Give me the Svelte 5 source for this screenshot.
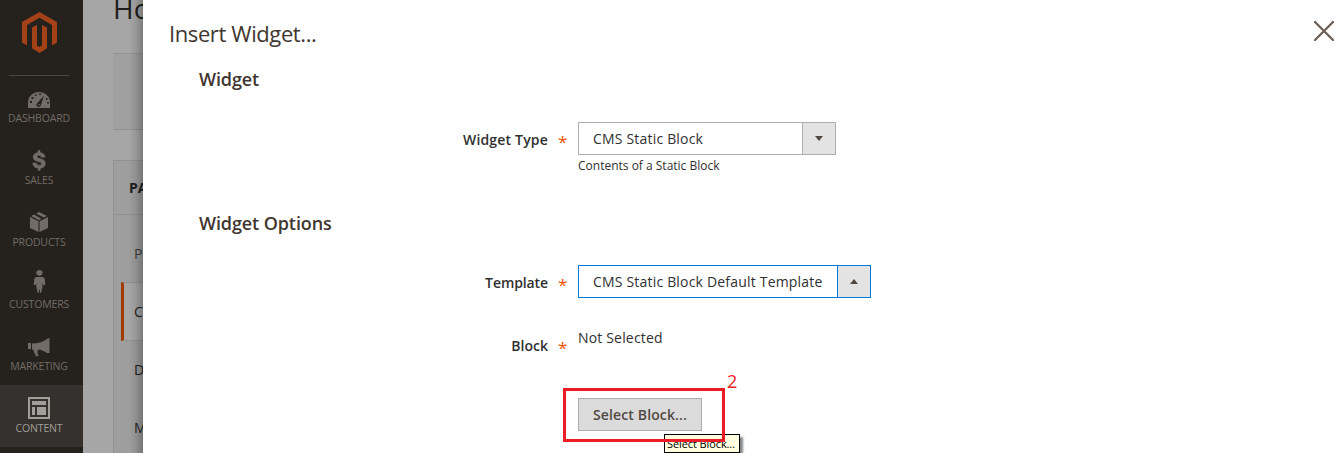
<script>
  const menu = ['Dashboard', 'Sales', 'Products', 'Customers', 'Marketing', 'Content'];
  const tabs = ['P', 'C', 'D', 'M'];
</script>

{#snippet icon(name)}
  <svg width="24" height="24" viewBox="0 0 24 24" fill="currentColor">
    {#if name === 'Dashboard'}
      <path d="M1 21v-5C1 9 6 5 12 5s11 4 11 11v5z" />
      <g fill="#25211d">
        <path d="M10 16.500l7-8-3 9c-.5 2.500-2 3-3.500 2s-1.500-2-.5-3z" />
        <path d="M3 14h2v2H3zM4.500 10h2v2h-2zM8 7.500h1.500V9H8zM12 6.500h2V8h-2zM19 11h1.500v2H19zM20 15h2v1.500h-2z" />
      </g>
      <circle cx="12" cy="17.800" r=".8" />
    {:else if name === 'Sales'}
      <path stroke="currentColor" stroke-width=".5" transform="translate(0 -.6)" d="M11 2h2v2.200c2.900.3 4.900 1.800 5.100 4.700h-3.700c-.2-1.300-.9-1.900-2.400-1.900-1.300 0-2 .4-2 1.300 0 1.100 1.500 1.400 3.500 2 3 .8 4.900 2.100 4.900 4.900 0 2.700-1.900 4.300-5.200 4.600V22h-2v-2.200c-3.300-.3-5.300-2.200-5.500-5.300h3.700c.2 1.500 1.100 2.300 2.700 2.300 1.500 0 2.400-.5 2.400-1.500 0-1.300-1.300-1.600-3.500-2.200C8.200 12.400 6.200 11.300 6.200 8.600c0-2.500 1.900-4.100 4.800-4.400z" />
    {:else if name === 'Products'}
      <path d="M3 6l8.500 4.300V21L3 17zM21 6l-8.500 4.300V21l8.500-4zM4 5l3-1.500 7.500 4.200L12 9.200zM9 2.500L12 1l8 4-3.200 1.600z" />
    {:else if name === 'Customers'}
      <path d="M9.300-.2c0-3.800 6.300-3.800 6.300 0 0 4-6.300 4-6.300 0zM10 4h5c2 0 2.600 1 2.800 2.500L18.300 12h-2.100L15.500 9.500V14l-1.500 6h-.8l-.8-4.500-.8 4.500h-.8l-1.500-6V9.500L8.700 12H6.700L7.200 6.500C7.400 5 8 4 10 4z" />
    {:else if name === 'Marketing'}
      <path d="M1 8h3v6H1zM5 8.500c6 0 11-1.500 15-4.500l1-.8h1.500V18H20c-3-2-5.500-3-8-3.500l-1.500 1 .2 3.500 1 2-2.700.2L6 14.500H5z" />
    {:else}
      <path fill-rule="evenodd" d="M1 0h22v22H1zM3 2v18h18V2zM5 4h14v4H5zM5 10h3v8H5zM10 10h9v8h-9z" />
    {/if}
  </svg>
{/snippet}

<div class="app">
  <nav>
    <div class="logo">
      <svg width="35" height="41" viewBox="0 0 35 41" fill="#a24216">
        <path d="M17.500 0L35 10v20.500L30 33.500V13L17.500 5.800 5 13v20.500L0 30.500V10z" />
        <path d="M10 15.500l5-2.500v20.500l2.500 1.500 2.500-1.500V13l5 2.500v20.700L17.500 41 10 36.200z" />
      </svg>
    </div>
    {#each menu as name}
      <div class="item {name.toLowerCase()}" class:on={name === 'Content'}>
        {@render icon(name)}
        <span>{name.toUpperCase()}</span>
      </div>
    {/each}
  </nav>

  <div class="page">
    <h1>Ho</h1>
    <div class="toolbar"></div>
    <div class="panel">
      <strong>PA</strong>
      <ul>
        {#each tabs as tab, i}
          <li class:on={i === 1} class:muted={i === 0}>{tab}</li>
        {/each}
      </ul>
    </div>
  </div>

  <main>
    <header>
      <h2>Insert Widget...</h2>
      <svg width="20" height="20" viewBox="0 0 20 20" stroke="#6b6059" stroke-width="2.300" stroke-linecap="round"><path d="M1 1l18 18M19 1L1 19" /></svg>
    </header>
    <h3>Widget</h3>
    <div class="row type">
      <label for="type">Widget Type</label><i>*</i>
      <div>
        <div class="select" id="type"><span>CMS Static Block</span><b><svg width="8" height="5"><path d="M0 0h8L4 5z" fill="#514943" /></svg></b></div>
        <small>Contents of a Static Block</small>
      </div>
    </div>
    <h3>Widget Options</h3>
    <div class="row template">
      <label for="template">Template</label><i>*</i>
      <div class="select focus" id="template"><span>CMS Static Block Default Template</span><b><svg width="8" height="5"><path d="M0 5h8L4 0z" fill="#514943" /></svg></b></div>
    </div>
    <div class="row block">
      <label for="block">Block</label><i>*</i>
      <div class="value">Not Selected</div>
    </div>
    <button id="block">Select Block...</button>
    <div class="tip">Select Block...</div>
    <div class="mark"></div>
    <div class="step">2</div>
  </main>
</div>

<style>
  :global(body) { margin: 0; overflow: hidden; }
  * { box-sizing: border-box; }
  .app { display: flex; width: 1343px; height: 453px; overflow: hidden; font: 14px/20px "Open Sans", sans-serif; color: #303030; }
  nav { width: 83px; height: 453px; overflow: hidden; background: #25211d; flex: none; }
  .logo { height: 75px; padding: 12px 0 0 22px; }
  .logo svg { display: block; }
  .item { height: 62px; display: flex; flex-direction: column; align-items: center; padding: 12px 5px 0 0; color: #716d66; }
  .item svg { display: block; flex: none; overflow: visible; }
  .item span { font-size: 10.500px; line-height: 14px; letter-spacing: -0.15px; white-space: nowrap; }
  .dashboard { background: linear-gradient(#4a4743, #4a4743) 9px 0 / 60px 1px no-repeat; }
  .on.item { background: #35312e; color: #a29e99; }
  .page { width: 60px; flex: none; padding-left: 30px; overflow: hidden; background: #a6a6a6; color: #201e1d; position: relative; }
  .page::after { content: ""; position: absolute; inset: 0 0 0 auto; width: 14px; background: linear-gradient(90deg, transparent, rgba(0, 0, 0, .08) 45%, rgba(0, 0, 0, .26)); }
  h1 { margin: 0; height: 53px; font-size: 28px; font-weight: 400; line-height: 17px; white-space: nowrap; }
  .toolbar { height: 77px; border: 1px solid #929292; border-width: 1px 0; background: rgba(0, 0, 0, .035); }
  .panel { margin-top: 30px; height: 300px; border: 1px solid #919191; border-right: 0; background: rgba(0, 0, 0, .045); }
  .panel strong { display: block; height: 54px; border-bottom: 1px solid #919191; padding-left: 15px; line-height: 54px; }
  ul { list-style: none; margin: 10px 0 0; padding: 0 0 0 7px; }
  li { height: 58px; line-height: 58px; padding-left: 13px; }
  li.muted { color: #403d3b; }
  li.on { height: 59px; margin: -1px 0 0; padding-left: 10px; border: 1px solid #919191; border-width: 1px 0; border-left: 3px solid #a33b00; background: #a6a6a6; }
  main { position: relative; width: 1200px; flex: none; background: #fff; }
  header { display: flex; justify-content: space-between; height: 65px; padding: 20px 9px 0 26px; }
  header svg { margin-top: 1px; }
  h2 { margin: 0; font-size: 22px; line-height: 26px; font-weight: 400; letter-spacing: -0.4px; color: #41362f; }
  h3 { margin: 0 0 0 56px; height: 28px; line-height: 28px; font-size: 18px; font-weight: 600; letter-spacing: -.1px; color: #41362f; }
  .row { display: flex; }
  .row label { width: 405px; text-align: right; font-weight: 600; padding-top: 8px; }
  .row i { width: 30px; padding: 10px 0 0 10px; color: #eb5202; font-style: normal; font-size: 17px; font-weight: 400; }
  .type { margin-top: 29px; height: 87px; }
  .type label { letter-spacing: .18px; }
  .select { display: flex; width: 258px; height: 33px; border: 1px solid #adadad; line-height: 31px; letter-spacing: .19px; }
  .select span { flex: 1; padding-left: 14px; white-space: nowrap; }
  .select b { width: 33px; background: #e3e3e3; border-left: 1px solid #adadad; display: flex; align-items: center; justify-content: center; }
  .focus { width: 293px; border-color: #007bdb; }
  .focus b { border-color: #007bdb; }
  small { display: block; font-size: 12px; line-height: 22px; }
  .template { margin-top: 28px; height: 63px; }
  .template label { letter-spacing: -.1px; }
  .block { height: 70px; }
  .value { letter-spacing: .17px; }
  button { display: block; margin-left: 435px; width: 124px; height: 33px; padding: 0; background: #dbdbdb; border: 1px solid #adadad; border-radius: 0; font: 600 14px "Open Sans", sans-serif; letter-spacing: .14px; color: #514943; }
  .mark { position: absolute; left: 420px; top: 388px; width: 162px; height: 54px; border: 3px solid #ed1c24; }
  .tip { position: absolute; left: 521px; top: 434px; width: 76px; height: 19px; border: 1px solid #000; background: #ffffe1; color: #000; font-size: 11px; line-height: 17px; padding-left: 2px; letter-spacing: -.1px; white-space: nowrap; box-shadow: 3px 3px 2px #888; }
  .step { position: absolute; left: 584px; top: 371px; font-size: 18px; line-height: 21px; color: #ed1c24; }
</style>
